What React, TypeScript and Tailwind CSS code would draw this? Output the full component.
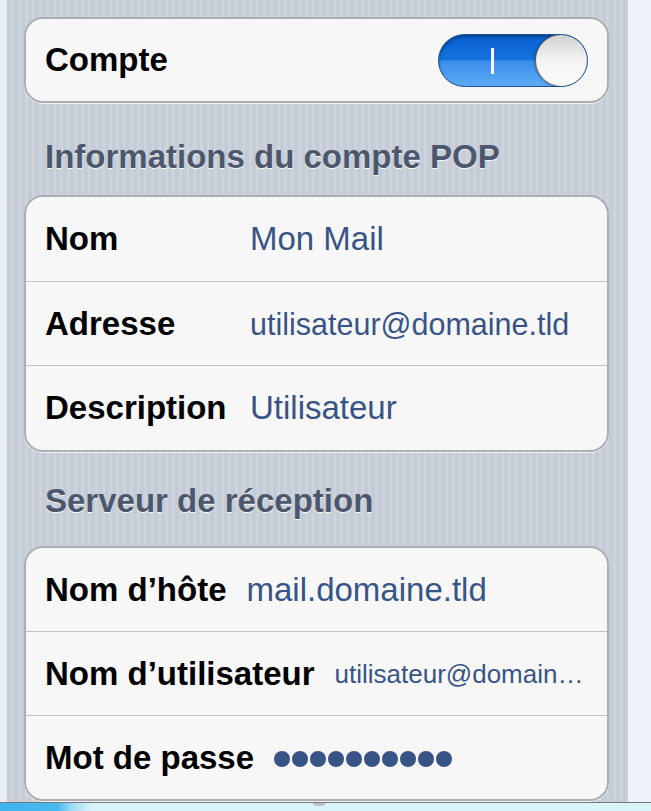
import React from "react";

const font = "font-['Liberation_Sans',Arial,Helvetica,sans-serif]";

function Toggle() {
  return (
    <div className="relative w-[150px] h-[53px] rounded-full overflow-hidden border border-[#1d4f96] bg-[linear-gradient(180deg,#0a5fd0_0%,#1472df_48%,#3a8fec_52%,#5eaaf3_100%)] shadow-[inset_0_2px_3px_rgba(0,0,0,0.35)]">
      <div className="absolute left-[52px] top-[13px] w-[3px] h-[26px] bg-white" />
      <div className="absolute right-[-1px] top-[-1px] w-[53px] h-[53px] rounded-full border border-[#62666b] bg-[linear-gradient(180deg,#d0d0d0_0%,#f2f2f2_45%,#fdfdfd_100%)] shadow-[-1px_0_2px_rgba(0,0,0,0.3)]" />
    </div>
  );
}

function Card({ className, children }: { className: string; children: React.ReactNode }) {
  return (
    <div
      className={`flex flex-col rounded-[19px] border-2 border-[#abafb4] bg-[#f7f7f7] shadow-[0_1px_0_rgba(255,255,255,0.75)] overflow-hidden ${className}`}
    >
      {children}
    </div>
  );
}

function Header({ text, className }: { text: string; className: string }) {
  return (
    <div className={`pl-[21px] ${className}`}>
      <div className="text-[33px] leading-[40px] font-bold text-[#4c566c] [text-shadow:0_1px_0_rgba(255,255,255,0.85)]">
        {text}
      </div>
    </div>
  );
}

function Row({
  label,
  children,
  first,
  fixed,
}: {
  label: string;
  children: React.ReactNode;
  first?: boolean;
  fixed?: boolean;
}) {
  return (
    <div
      className={`flex-1 flex items-center pl-[19px] pr-[20px] ${first ? "" : "border-t border-[#bfc2c6]"}`}
    >
      <div
        className={`text-[33px] leading-[40px] font-bold text-black whitespace-nowrap ${fixed ? "w-[205px] shrink-0" : "mr-[20px]"}`}
      >
        {label}
      </div>
      <div className="text-[#385487] whitespace-nowrap flex items-center">{children}</div>
    </div>
  );
}

export default function App() {
  return (
    <div className={`w-[651px] h-[811px] overflow-hidden flex flex-col bg-[#eef2fa] ${font}`}>
      <div className="h-[802px] flex">
        <div className="w-[7px] bg-[#e9eef6]" />
        <div className="w-[621px] pl-[17px] pr-[19px] pt-[17px] flex flex-col bg-[repeating-linear-gradient(90deg,#c5ccd5_0px,#c5ccd5_4px,#ccd3dc_4px,#ccd3dc_7px)]">
          <Card className="h-[86px]">
            <div className="flex-1 flex items-center justify-between pl-[19px] pr-[19px]">
              <div className="text-[33px] leading-[40px] font-bold text-black">Compte</div>
              <Toggle />
            </div>
          </Card>

          <Header text="Informations du compte POP" className="h-[92px] pt-[34px]" />

          <Card className="h-[257px]">
            <Row label="Nom" first fixed>
              <span className="text-[33px] leading-[40px]">Mon Mail</span>
            </Row>
            <Row label="Adresse" fixed>
              <span className="text-[30.5px] leading-[40px]">utilisateur@domaine.tld</span>
            </Row>
            <Row label="Description" fixed>
              <span className="text-[33px] leading-[40px]">Utilisateur</span>
            </Row>
          </Card>

          <Header text="Serveur de réception" className="h-[94px] pt-[29px]" />

          <Card className="h-[255px]">
            <Row label="Nom d’hôte" first>
              <span className="text-[33px] leading-[40px]">mail.domaine.tld</span>
            </Row>
            <Row label="Nom d’utilisateur">
              <span className="text-[26px] leading-[40px]">utilisateur@domain…</span>
            </Row>
            <Row label="Mot de passe">
              <span className="flex gap-[2px] pt-[2px]">
                {Array.from({ length: 10 }).map((_, i) => (
                  <span key={i} className="block w-[16px] h-[16px] rounded-full bg-[#385487]" />
                ))}
              </span>
            </Row>
          </Card>
        </div>
        <div className="flex-1 bg-[#eef2fa]" />
      </div>
      <div className="h-px bg-[#76787c]" />
      <div className="h-[8px] flex bg-[#d8f6fa]">
        <div className="w-[72px] bg-[linear-gradient(90deg,#3fb4ec_0%,#46b9ef_80%,#9fdcf5_100%)]" />
        <div className="w-[20px] bg-[linear-gradient(90deg,#9fdcf5,#d8f6fa)]" />
        <div className="w-[221px]" />
        <div className="w-[12px] h-[3px] rounded-b-full bg-[#b9c2c6]" />
      </div>
    </div>
  );
}
